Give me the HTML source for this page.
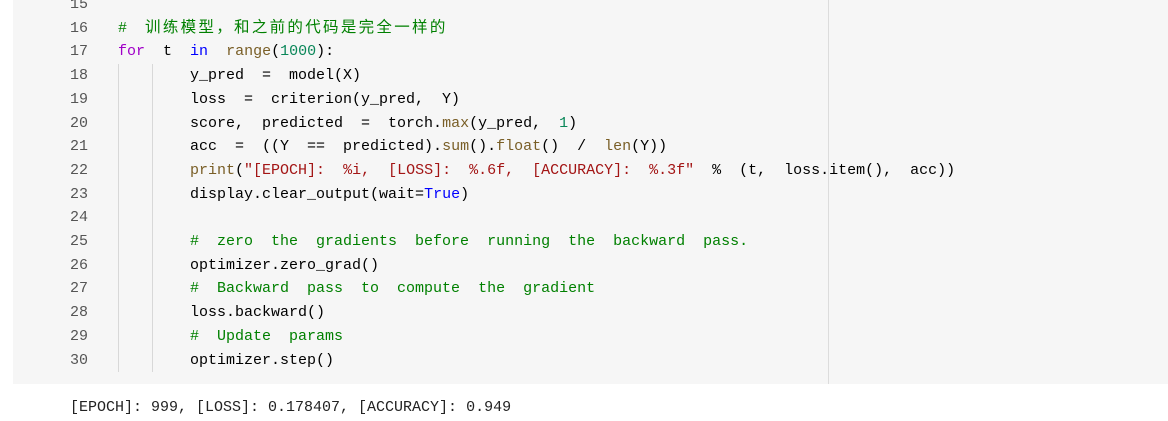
<!DOCTYPE html>
<html><head><meta charset="utf-8"><style>
html,body{margin:0;padding:0;background:#fff;width:1168px;height:421px;overflow:hidden;position:relative}
.panel{position:absolute;left:13px;top:0;width:1155px;height:384px;background:#f6f6f6}
.ruler{position:absolute;left:828px;top:0;width:1px;height:384px;background:#dcdcdc}
.g{position:absolute;width:1px;background:#d8d8d8}
pre{margin:0;font-family:"Liberation Mono","Noto Sans CJK SC",monospace;font-size:15px;line-height:23.7px;color:#000}
.ln{position:absolute;left:40px;top:-7px;width:48px;text-align:right;color:#555}
.code{position:absolute;left:118px;top:-7px}
.c{color:#008000}.k{color:#a000c8}.b{color:#0000ff}.f{color:#795e26}.n{color:#098658}.s{color:#a31515}
.cjk{font-size:15.5px;letter-spacing:2.3px}
.out{position:absolute;left:70px;top:396px;color:#222}
</style></head><body>
<div class="panel"></div>
<div class="ruler"></div>
<div class="g" style="left:118px;top:64px;height:308px"></div>
<div class="g" style="left:152px;top:64px;height:308px"></div>
<pre class="ln">15
16
17
18
19
20
21
22
23
24
25
26
27
28
29
30</pre>
<pre class="code">

<span class="c">#  <span class="cjk">训练模型，和之前的代码是完全一样的</span></span>
<span class="k">for</span>  t  <span class="b">in</span>  <span class="f">range</span>(<span class="n">1000</span>):
        y_pred  =  model(X)
        loss  =  criterion(y_pred,  Y)
        score,  predicted  =  torch.<span class="f">max</span>(y_pred,  <span class="n">1</span>)
        acc  =  ((Y  ==  predicted).<span class="f">sum</span>().<span class="f">float</span>()  /  <span class="f">len</span>(Y))
        <span class="f">print</span>(<span class="s">"[EPOCH]:  %i,  [LOSS]:  %.6f,  [ACCURACY]:  %.3f"</span>  %  (t,  loss.item(),  acc))
        display.clear_output(wait=<span class="b">True</span>)

        <span class="c">#  zero  the  gradients  before  running  the  backward  pass.</span>
        optimizer.zero_grad()
        <span class="c">#  Backward  pass  to  compute  the  gradient</span>
        loss.backward()
        <span class="c">#  Update  params</span>
        optimizer.step()</pre>
<pre class="out">[EPOCH]: 999, [LOSS]: 0.178407, [ACCURACY]: 0.949</pre>
</body></html>
